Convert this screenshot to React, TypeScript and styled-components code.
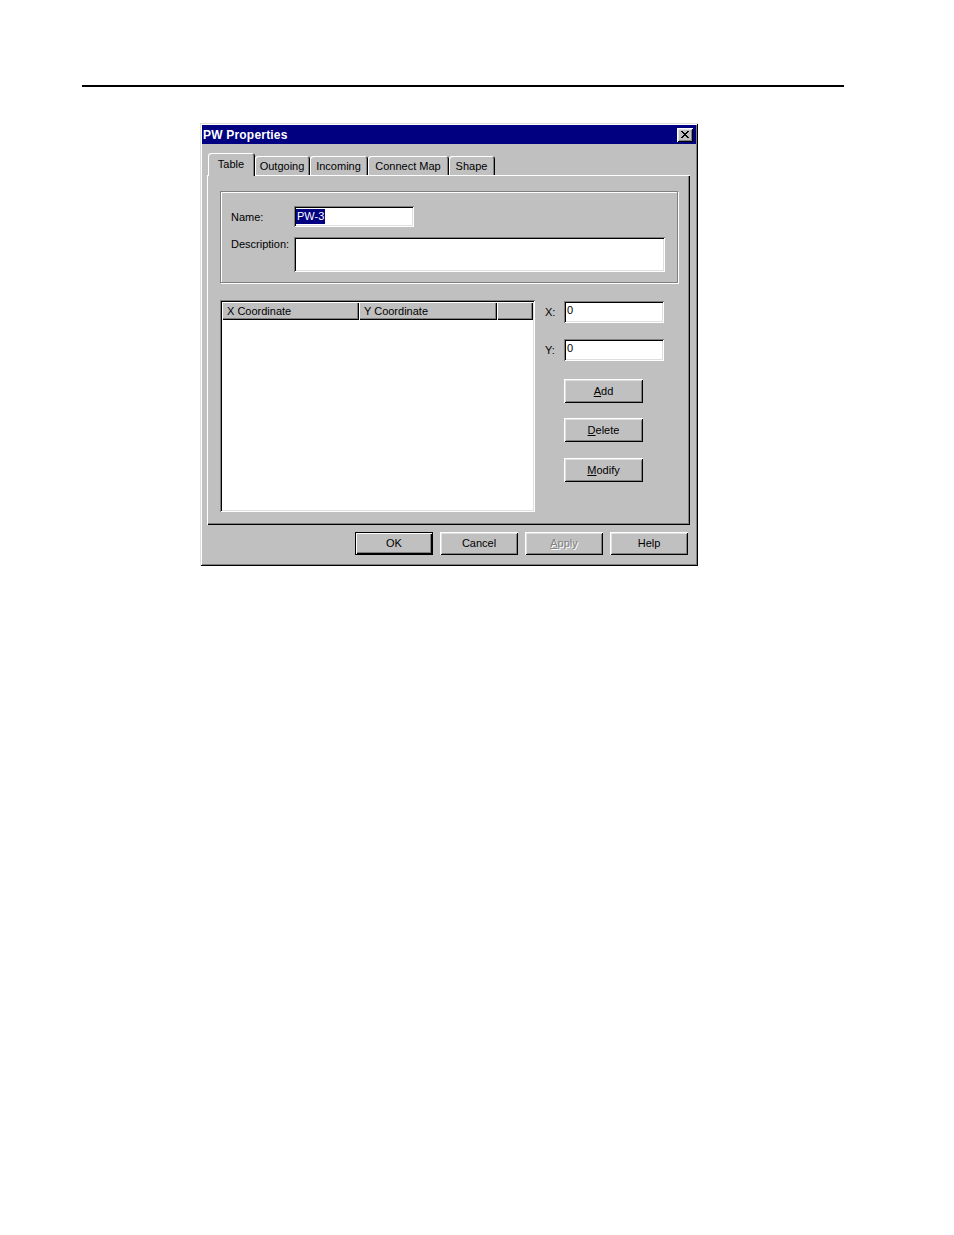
import styled, { createGlobalStyle } from "styled-components";

const GlobalStyle = createGlobalStyle`
  html, body {
    margin: 0;
    padding: 0;
    background: #ffffff;
  }
  body {
    font-family: "Liberation Sans", Arial, sans-serif;
    font-size: 11px;
    color: #000000;
  }
`;

const raised = `
  box-shadow: inset 1px 1px #ffffff, inset -1px -1px #000000,
    inset 2px 2px #dfdfdf, inset -2px -2px #808080;
`;

const sunken = `
  box-shadow: inset 1px 1px #808080, inset -1px -1px #ffffff,
    inset 2px 2px #000000, inset -2px -2px #dfdfdf;
`;

// tab label and its width on the strip
const tabs: [string, number][] = [
  ["Table", 47],
  ["Outgoing", 55],
  ["Incoming", 58],
  ["Connect Map", 81],
  ["Shape", 46],
];

const CloseIcon = () => (
  <svg width="8" height="7" viewBox="0 0 8 7" shapeRendering="crispEdges">
    <path
      d="M0 0h2v1h-2zM6 0h2v1h-2zM1 1h2v1h-2zM5 1h2v1h-2zM2 2h4v1h-4zM3 3h2v1h-2zM2 4h4v1h-4zM1 5h2v1h-2zM5 5h2v1h-2zM0 6h2v1h-2zM6 6h2v1h-2z"
      fill="#000"
    />
  </svg>
);

const PropertiesDialog = () => {
  return (
    <Window>
      <TitleBar>
        <TitleText>PW Properties</TitleText>
        <CloseButton>
          <CloseIcon />
        </CloseButton>
      </TitleBar>
      <Body>
        <TabStrip>
          {tabs.map(([t, w], i) => (
            <Tab key={t} $active={i === 0} $w={w}>
              {t}
            </Tab>
          ))}
        </TabStrip>
        <Panel>
          <GroupBox>
            <FieldLabel>Name:</FieldLabel>
            <NameField>
              <Selected>PW-3</Selected>
            </NameField>
            <FieldLabel $top>Description:</FieldLabel>
            <DescField />
          </GroupBox>
          <ListRow>
            <ListBox>
              <HeaderRow>
                <HeaderCell $w={137}>X Coordinate</HeaderCell>
                <HeaderCell $w={138}>Y Coordinate</HeaderCell>
                <HeaderCell $w={0} />
              </HeaderRow>
            </ListBox>
            <SideColumn>
              <CoordRow>
                <CoordLabel>X:</CoordLabel>
                <CoordField>0</CoordField>
              </CoordRow>
              <CoordRow $gap={16}>
                <CoordLabel>Y:</CoordLabel>
                <CoordField>0</CoordField>
              </CoordRow>
              <SideButton $gap={18}>
                <u>A</u>dd
              </SideButton>
              <SideButton $gap={15}>
                <u>D</u>elete
              </SideButton>
              <SideButton $gap={16}>
                <u>M</u>odify
              </SideButton>
            </SideColumn>
          </ListRow>
        </Panel>
        <ButtonRow>
          <DialogButton $default>OK</DialogButton>
          <DialogButton>Cancel</DialogButton>
          <DialogButton $disabled>
            <u>A</u>pply
          </DialogButton>
          <DialogButton>Help</DialogButton>
        </ButtonRow>
      </Body>
    </Window>
  );
};

function App() {
  return (
    <>
      <GlobalStyle />
      <Page>
        <Rule />
        <PropertiesDialog />
      </Page>
    </>
  );
}

const Page = styled.div`
  width: 954px;
  height: 1235px;
  padding-top: 85px;
  box-sizing: border-box;
  display: flex;
  flex-direction: column;
`;

const Rule = styled.div`
  margin-left: 82px;
  width: 762px;
  height: 2px;
  background: #000000;
`;

const Window = styled.div`
  margin-top: 36px;
  margin-left: 200px;
  width: 498px;
  height: 443px;
  box-sizing: border-box;
  padding: 2px;
  background: #c0c0c0;
  box-shadow: inset 1px 1px #dfdfdf, inset -1px -1px #000000,
    inset 2px 2px #ffffff, inset -2px -2px #808080;
  display: flex;
  flex-direction: column;
`;

const TitleBar = styled.div`
  height: 19px;
  background: #000080;
  display: flex;
  align-items: center;
  justify-content: space-between;
  padding: 0 3px 0 1px;
`;

const TitleText = styled.span`
  color: #ffffff;
  font-weight: bold;
  font-size: 12px;
  letter-spacing: 0.2px;
`;

const CloseButton = styled.div`
  width: 16px;
  height: 14px;
  background: #c0c0c0;
  ${raised}
  display: flex;
  align-items: center;
  justify-content: center;
  padding-bottom: 1px;
  box-sizing: border-box;
`;

const Body = styled.div`
  flex: 1;
  display: flex;
  flex-direction: column;
  padding: 9px 6px 0 5px;
`;

const TabStrip = styled.div`
  display: flex;
  align-items: flex-end;
  height: 22px;
  padding-left: 1px;
`;

const Tab = styled.div<{ $active?: boolean; $w: number }>`
  position: relative;
  z-index: ${(p) => (p.$active ? 1 : 0)};
  width: ${(p) => p.$w}px;
  box-sizing: border-box;
  height: ${(p) => (p.$active ? "23px" : "19px")};
  margin-bottom: ${(p) => (p.$active ? "-1px" : "0")};
  padding: ${(p) => (p.$active ? "0 1px 2px 0" : "0 1px 0 0")};
  background: #c0c0c0;
  border-radius: 3px 3px 0 0;
  box-shadow: inset 1px 1px #ffffff, inset -1px 0 #000000,
    inset -2px 0 #808080;
  display: flex;
  align-items: center;
  justify-content: center;
  white-space: nowrap;
`;

const Panel = styled.div`
  height: 350px;
  box-sizing: border-box;
  padding: 16px 12px 0 13px;
  box-shadow: inset 1px 1px #ffffff, inset -1px -1px #000000,
    inset -2px -2px #808080;
  display: flex;
  flex-direction: column;
`;

const GroupBox = styled.div`
  width: 458px;
  height: 92px;
  box-sizing: border-box;
  border: 1px solid #808080;
  box-shadow: inset 1px 1px #ffffff, 1px 1px #ffffff;
  display: grid;
  grid-template-columns: 63px auto;
  grid-template-rows: 21px 35px;
  row-gap: 10px;
  align-content: start;
  padding: 14px 12px 0 10px;
`;

const FieldLabel = styled.span<{ $top?: boolean }>`
  align-self: ${(p) => (p.$top ? "start" : "center")};
  padding-top: ${(p) => (p.$top ? "1px" : "0")};
  white-space: nowrap;
`;

const fieldBase = `
  background: #ffffff;
  box-sizing: border-box;
  display: flex;
  align-items: center;
  padding: 0 3px;
`;

const NameField = styled.div`
  ${fieldBase}
  ${sunken}
  width: 120px;
  height: 21px;
  padding-left: 2px;
`;

const Selected = styled.span`
  background: #000080;
  color: #ffffff;
  line-height: 15px;
  padding: 0 1px;
`;

const DescField = styled.div`
  ${fieldBase}
  ${sunken}
  width: 371px;
  height: 35px;
`;

const ListRow = styled.div`
  display: flex;
  margin-top: 17px;
`;

const ListBox = styled.div`
  width: 315px;
  height: 212px;
  box-sizing: border-box;
  padding: 2px;
  background: #ffffff;
  ${sunken}
`;

const HeaderRow = styled.div`
  display: flex;
  height: 18px;
`;

const HeaderCell = styled.div<{ $w: number }>`
  width: ${(p) => (p.$w ? `${p.$w}px` : "auto")};
  flex: ${(p) => (p.$w ? "none" : "1")};
  background: #c0c0c0;
  box-sizing: border-box;
  box-shadow: inset 1px 1px #ffffff, inset -1px -1px #000000,
    inset -2px -2px #808080;
  display: flex;
  align-items: center;
  padding: 0 0 1px 5px;
  white-space: nowrap;
`;

const SideColumn = styled.div`
  margin-left: 10px;
  margin-top: 1px;
  display: flex;
  flex-direction: column;
`;

const CoordRow = styled.div<{ $gap?: number }>`
  display: flex;
  align-items: center;
  margin-top: ${(p) => p.$gap ?? 0}px;
`;

const CoordLabel = styled.span`
  width: 19px;
`;

const CoordField = styled.div`
  ${fieldBase}
  ${sunken}
  width: 100px;
  height: 22px;
  align-items: flex-start;
  padding-top: 3px;
`;

const buttonBase = `
  background: #c0c0c0;
  box-sizing: border-box;
  display: flex;
  align-items: center;
  justify-content: center;
  padding-bottom: 1px;
  u { text-decoration: underline; text-underline-offset: 1px; }
`;

const SideButton = styled.div<{ $gap: number }>`
  ${buttonBase}
  ${raised}
  width: 79px;
  height: 24px;
  margin-left: 19px;
  margin-top: ${(p) => p.$gap}px;
`;

const ButtonRow = styled.div`
  display: flex;
  justify-content: flex-end;
  gap: 7px;
  margin-top: 7px;
  padding-right: 2px;
`;

const DialogButton = styled.div<{ $default?: boolean; $disabled?: boolean }>`
  ${buttonBase}
  width: 78px;
  height: 23px;
  color: ${(p) => (p.$disabled ? "#808080" : "#000000")};
  text-shadow: ${(p) => (p.$disabled ? "1px 1px #ffffff" : "none")};
  box-shadow: ${(p) =>
    p.$default
      ? "inset 0 0 0 1px #000000, inset 2px 2px #ffffff, inset -2px -2px #000000, inset -3px -3px #808080"
      : "inset 1px 1px #ffffff, inset -1px -1px #000000, inset 2px 2px #dfdfdf, inset -2px -2px #808080"};
`;

export default App;
